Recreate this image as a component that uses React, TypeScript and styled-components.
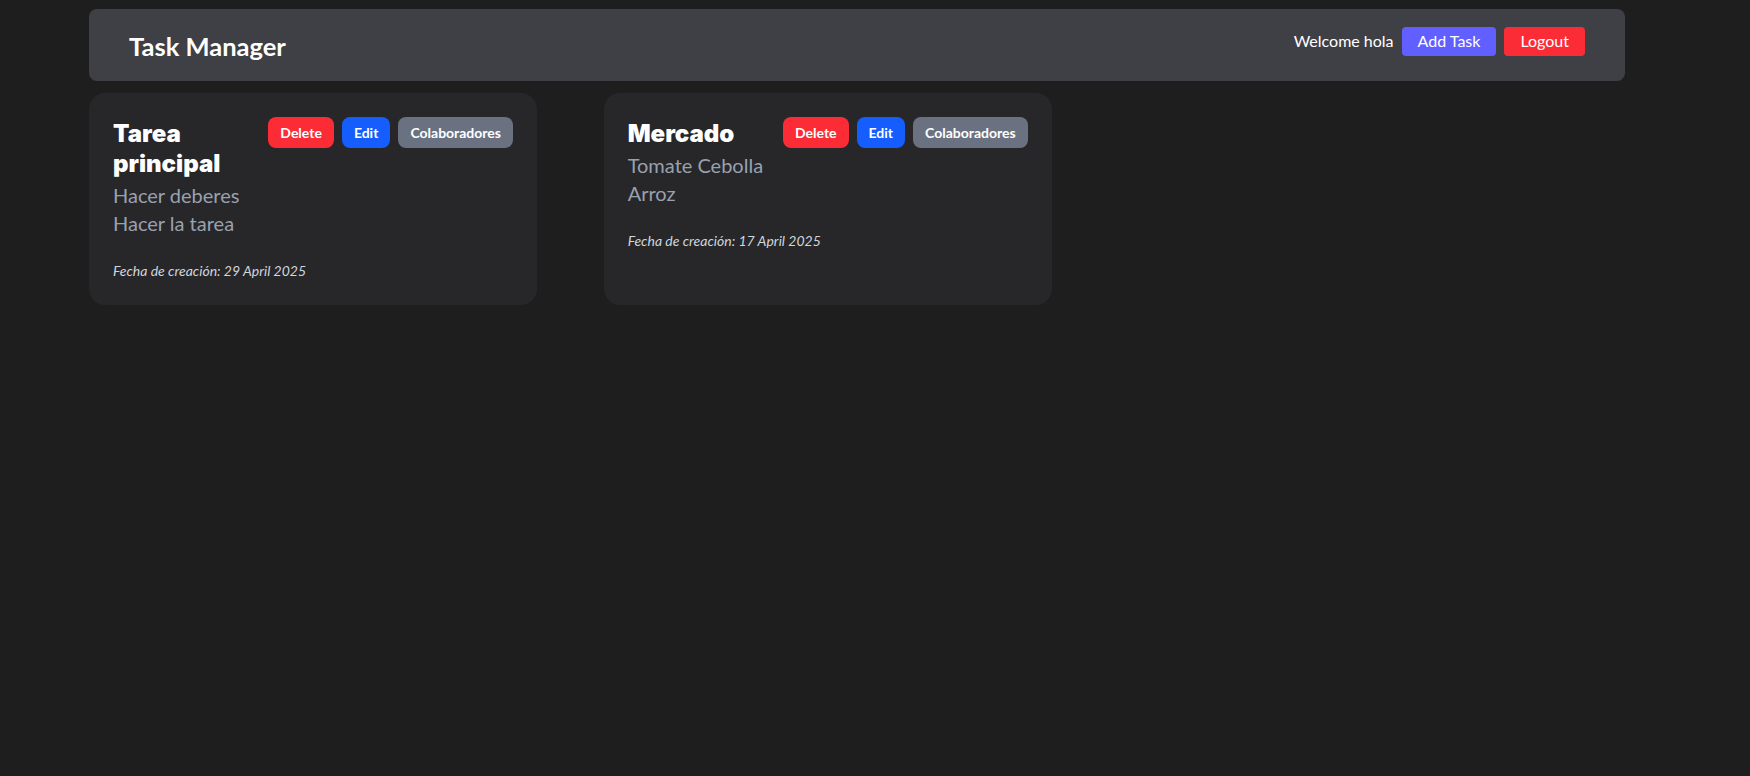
import React from 'react';
import styled, { createGlobalStyle } from 'styled-components';

const GlobalStyle = createGlobalStyle`
  html, body {
    margin: 0;
    padding: 0;
    background: #1e1e1e;
    font-family: Lato, "Noto Sans", sans-serif;
    color: #ffffff;
  }
  * {
    box-sizing: border-box;
  }
`;

interface ITask {
  id: number;
  title: string;
  lines: string[];
  date: string;
}

const tasks: ITask[] = [
  {
    id: 1,
    title: 'Tarea principal',
    lines: ['Hacer deberes', 'Hacer la tarea'],
    date: '29 April 2025',
  },
  {
    id: 2,
    title: 'Mercado',
    lines: ['Tomate Cebolla', 'Arroz'],
    date: '17 April 2025',
  },
];

const App: React.FC = () => (
  <>
    <GlobalStyle />
    <Page>
      <Navbar>
        <Brand>Task Manager</Brand>
        <NavRight>
          <Welcome>Welcome hola</Welcome>
          <NavButton color="#615fff">Add Task</NavButton>
          <NavButton color="#fb2c36">Logout</NavButton>
        </NavRight>
      </Navbar>
      <TaskGrid>
        {tasks.map((task) => (
          <Card key={task.id}>
            <CardHead>
              <CardTitle>{task.title}</CardTitle>
              <Actions>
                <ActionButton color="#fb2c36">Delete</ActionButton>
                <ActionButton color="#155dfc">Edit</ActionButton>
                <ActionButton color="#6a7282">Colaboradores</ActionButton>
              </Actions>
            </CardHead>
            <Description>
              {task.lines.map((line) => (
                <div key={line}>{line}</div>
              ))}
            </Description>
            <CreatedAt>Fecha de creación: {task.date}</CreatedAt>
          </Card>
        ))}
      </TaskGrid>
    </Page>
  </>
);
export default App;

const Page = styled.div`
  width: 1536px;
  margin: 9px 0 0 89px;
`;

const Navbar = styled.nav`
  height: 72px;
  background: #3f3f46;
  border-radius: 8px;
  padding: 0 40px;
  display: flex;
  align-items: center;
  justify-content: space-between;
`;

const Brand = styled.div`
  font-size: 25.5px;
  font-weight: 700;
  line-height: 32px;
  padding-top: 2px;
`;

const NavRight = styled.div`
  display: flex;
  align-items: center;
  gap: 8px;
  padding-bottom: 8px;
`;

const Welcome = styled.span`
  font-size: 16px;
  line-height: 24px;
`;

const NavButton = styled.button<{ color: string }>`
  height: 29px;
  padding: 0 16px;
  border: none;
  border-radius: 4px;
  background: ${(p) => p.color};
  color: #ffffff;
  font-family: inherit;
  font-size: 16px;
  line-height: 24px;
`;

const TaskGrid = styled.div`
  margin-top: 12px;
  display: grid;
  grid-template-columns: repeat(3, 1fr);
  gap: 8px;
`;

const Card = styled.div`
  max-width: 448px;
  background: #27272a;
  border-radius: 16px;
  padding: 24px;
`;

const CardHead = styled.div`
  display: flex;
  justify-content: space-between;
  align-items: flex-start;
  gap: 16px;
`;

const CardTitle = styled.h2`
  margin: 0 0 2px;
  padding-top: 2px;
  font-family: Inter, Lato, sans-serif;
  font-size: 24px;
  font-weight: 900;
  line-height: 30px;
  color: #ffffff;
`;

const Actions = styled.div`
  display: flex;
  gap: 8px;
  flex-shrink: 0;
`;

const ActionButton = styled.button<{ color: string }>`
  height: 31px;
  padding: 0 12px;
  border: none;
  border-radius: 8px;
  background: ${(p) => p.color};
  color: #ffffff;
  font-family: inherit;
  font-size: 14px;
  font-weight: 700;
  line-height: 20px;
`;

const Description = styled.div`
  font-size: 20px;
  line-height: 28px;
  color: #99a1af;
`;

const CreatedAt = styled.p`
  margin: 24px 0 0;
  font-size: 14px;
  line-height: 20px;
  font-style: italic;
  color: #d1d5dc;
`;
